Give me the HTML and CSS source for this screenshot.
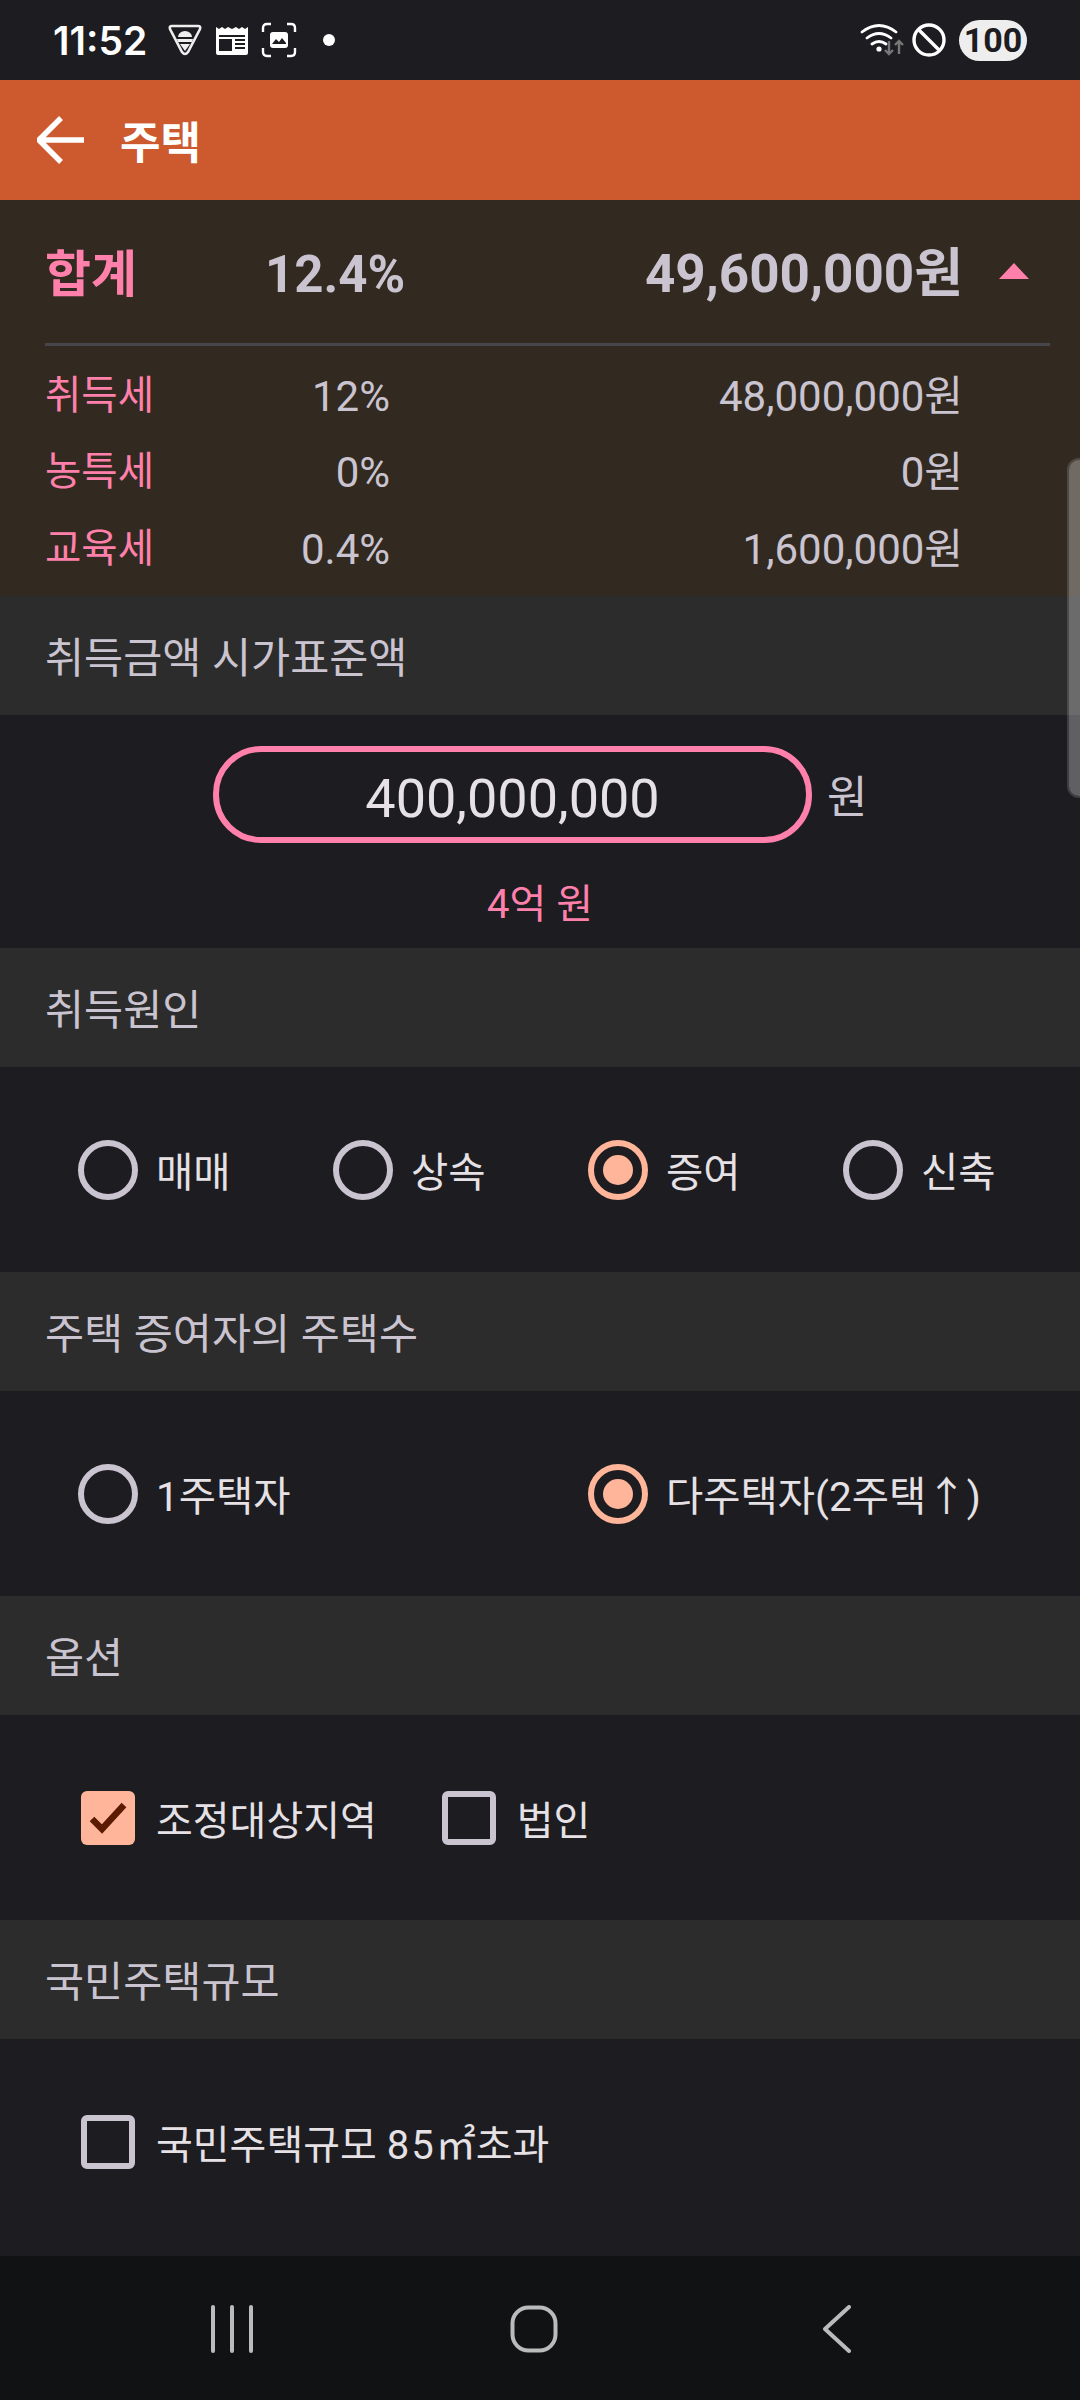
FILE: index.html
```html
<!DOCTYPE html>
<html lang="ko">
<head>
  <meta charset="UTF-8">
  <title>주택</title>
  <link rel="stylesheet" href="styles.css">
</head>
<body>
  <div class="phone">
    <div class="status">
      <span class="time">11:52</span>
      <svg class="ic-vpn" viewBox="0 0 34 32"><path d="M4 2h26q3 0 2 3L20 28q-3 4-6 0L2 5q-1-3 2-3z" fill="none" stroke="#eee" stroke-width="2.6"/><path d="M10 13a7 6 0 0 1 14 0z" fill="#eee"/><path d="M9 15h16l-1 3H10zM12 20h10l-5 7z" fill="#eee"/></svg>
      <svg class="ic-news" viewBox="0 0 34 30"><path d="M1 2l3 2 3-2 3 2 3-2 4 2 4-2 3 2 3-2 3 2 3-2v26q0 2-2 2H3q-2 0-2-2z" fill="#fff"/><path d="M4 10h26v2H4zM4 14h13v12H4zM20 14h10v2H20zM20 18h10v2H20zM20 22h10v2H20z" fill="#1c1c21"/></svg>
      <svg class="ic-shot" viewBox="0 0 36 36"><path d="M2 10V6q0-4 4-4h4M26 2h4q4 0 4 4v4M34 26v4q0 4-4 4h-4M10 34H6q-4 0-4-4v-4" fill="none" stroke="#fff" stroke-width="2.4"/><rect x="9" y="10" width="18" height="16" rx="3" fill="#fff"/><path d="M11 22l4-5 3 3 3-4 4 5v1H11z" fill="#1c1c21"/></svg>
      <span class="dot"></span>
      <span class="spacer"></span>
      <svg class="ic-wifi" viewBox="0 0 44 34"><path d="M2 9q17-13 34 0M7 15q12-9 24 0M12 21q7-5 14 0" fill="none" stroke="#fff" stroke-width="2.8" stroke-linecap="round"/><circle cx="19" cy="26" r="2.6" fill="#fff"/><path d="M29 18v13m-4-4l4 4 4-4M39 31V18m-4 4l4-4 4 4" fill="none" stroke="#777" stroke-width="2.4"/></svg>
      <svg class="ic-block" viewBox="0 0 34 34"><circle cx="17" cy="17" r="15" fill="none" stroke="#fff" stroke-width="3.4"/><path d="M7 7l20 20" stroke="#fff" stroke-width="3.4"/></svg>
      <span class="battery">100</span>
    </div>

    <header class="appbar">
      <svg class="back" viewBox="0 0 48 48"><path d="M47 24H3M24 2L2 24l22 22" fill="none" stroke="#fff" stroke-width="5.5"/></svg>
      <h1>주택</h1>
    </header>

    <section class="summary">
      <div class="sum-row total">
        <span class="sum-label">합계</span>
        <span class="sum-rate">12.4%</span>
        <span class="sum-amount">49,600,000원</span>
        <span class="caret"></span>
      </div>
      <div class="sum-row">
        <span class="sum-label">취득세</span>
        <span class="sum-rate">12%</span>
        <span class="sum-amount">48,000,000원</span>
      </div>
      <div class="sum-row">
        <span class="sum-label">농특세</span>
        <span class="sum-rate">0%</span>
        <span class="sum-amount">0원</span>
      </div>
      <div class="sum-row">
        <span class="sum-label">교육세</span>
        <span class="sum-rate">0.4%</span>
        <span class="sum-amount">1,600,000원</span>
      </div>
    </section>

    <h2 class="sec-title">취득금액 시가표준액</h2>
    <section class="amount">
      <div class="amount-line">
        <div class="pill">400,000,000</div>
        <span class="unit">원</span>
      </div>
      <div class="amount-hint">4억 원</div>
    </section>

    <h2 class="sec-title">취득원인</h2>
    <section class="opts cols4">
      <div class="opt"><span class="radio"></span>매매</div>
      <div class="opt"><span class="radio"></span>상속</div>
      <div class="opt"><span class="radio on"></span>증여</div>
      <div class="opt"><span class="radio"></span>신축</div>
    </section>

    <h2 class="sec-title">주택 증여자의 주택수</h2>
    <section class="opts cols2">
      <div class="opt"><span class="radio"></span>1주택자</div>
      <div class="opt"><span class="radio on"></span>다주택자(2주택↑)</div>
    </section>

    <h2 class="sec-title">옵션</h2>
    <section class="opts checks">
      <div class="opt"><span class="check on"><svg viewBox="0 0 54 54"><path d="M11 28l10 10 22-24" fill="none" stroke="#5a1b00" stroke-width="6.5"/></svg></span>조정대상지역</div>
      <div class="opt"><span class="check"></span>법인</div>
    </section>

    <h2 class="sec-title">국민주택규모</h2>
    <section class="opts checks last">
      <div class="opt"><span class="check"></span><span>국민주택규모 <span class="spaced">85</span>㎡초과</span></div>
    </section>

    <nav class="navbar">
      <svg class="nav-recent" viewBox="0 0 44 48"><path d="M3 2v44M22 2v44M41 2v44" stroke="#bbb" stroke-width="4" stroke-linecap="round"/></svg>
      <svg class="nav-home" viewBox="0 0 48 48"><rect x="2.5" y="2.5" width="43" height="43" rx="16" fill="none" stroke="#bbb" stroke-width="4"/></svg>
      <svg class="nav-back" viewBox="0 0 30 48"><path d="M27 2L3 24l24 22" fill="none" stroke="#bbb" stroke-width="4" stroke-linecap="round" stroke-linejoin="round"/></svg>
    </nav>

    <div class="scrollbar"></div>
  </div>
</body>
</html>
```

FILE: styles.css
```css
* {
  box-sizing: border-box;
}
html, body {
  margin: 0;
  padding: 0;
  background: #1c1c21;
}
.phone {
  position: relative;
  width: 1080px;
  height: 2400px;
  overflow: hidden;
  display: flex;
  flex-direction: column;
  font-family: Roboto, "Noto Sans CJK KR", sans-serif;
  color: #e6e1e5;
}

/* status bar */
.status {
  height: 80px;
  display: flex;
  align-items: center;
  padding: 0 53px 0 53px;
  background: #1c1c21;
  color: #fff;
}
.time {
  font-family: Inter, Roboto, sans-serif;
  font-size: 39px;
  font-weight: 600;
  width: 115px;
}
.ic-vpn { width: 34px; height: 32px; }
.ic-news { width: 34px; height: 30px; margin-left: 13px; }
.ic-shot { width: 36px; height: 36px; margin-left: 12px; }
.dot {
  width: 12px;
  height: 12px;
  border-radius: 50%;
  background: #fff;
  margin-left: 26px;
}
.spacer { flex: 1; }
.ic-wifi { width: 44px; height: 34px; }
.ic-block { width: 34px; height: 34px; margin-left: 8px; }
.battery {
  width: 68px;
  height: 41px;
  margin-left: 13px;
  border-radius: 21px;
  background: #eee;
  color: #1c1c21;
  font-size: 34px;
  font-weight: 700;
  line-height: 41px;
  text-align: center;
}

/* app bar */
.appbar {
  height: 120px;
  display: flex;
  align-items: center;
  padding-left: 37px;
  background: #cc5a2e;
}
.back { width: 48px; height: 48px; }
.appbar h1 {
  margin: 0 0 0 35px;
  font-size: 44px;
  font-weight: 700;
  color: #fff;
}

/* summary */
.summary {
  height: 396px;
  padding: 0 30px 8px 45px;
  background: #322a20;
  color: #cac4d0;
}
.sum-row {
  display: grid;
  grid-template-columns: 220px 125px 573px 87px;
  align-items: center;
  height: 76.5px;
  padding-top: 3px;
  font-size: 42px;
  line-height: 50px;
}
.sum-row .sum-label {
  margin-top: -2px;
  font-size: 39.5px;
}
.sum-row.total {
  height: 146px;
  margin-bottom: 11px;
  padding-top: 0;
  border-bottom: 3px solid #47464a;
  font-size: 53px;
  font-weight: 700;
}
.total .sum-label {
  margin-top: 6px;
  font-size: 50px;
}
.total .sum-rate {
  margin: 6px -13px 0 0;
  font-size: 51px;
}
.total .sum-amount { margin-top: 4px; }
.sum-label { color: #ff80ab; }
.sum-rate, .sum-amount { text-align: right; }
.caret {
  justify-self: end;
  width: 0;
  height: 0;
  margin: -2px 21px 0 0;
  border-left: 15px solid transparent;
  border-right: 15px solid transparent;
  border-bottom: 16px solid #ff80ab;
}

/* section headers */
.sec-title {
  height: 119px;
  margin: 0;
  padding: 3px 0 0 45px;
  background: #2c2c2c;
  color: #cac4d0;
  font-size: 42.5px;
  font-weight: 400;
  line-height: 119px;
}

/* amount input */
.amount {
  height: 233px;
  padding-top: 31px;
}
.amount-line {
  display: flex;
  align-items: center;
  padding-left: 213px;
}
.pill {
  width: 599px;
  height: 97px;
  border: 6px solid #ff80ab;
  border-radius: 48px;
  font-size: 54px;
  line-height: 93px;
  text-align: center;
}
.unit {
  margin: -2px 0 0 15px;
  color: #cac4d0;
  font-size: 44px;
}
.amount-hint {
  margin-top: 29px;
  color: #ff80ab;
  font-size: 40px;
  text-align: center;
}

/* radios and checks */
.opts {
  height: 205px;
  display: grid;
  align-items: center;
  padding-left: 78px;
  font-size: 40.5px;
}
.cols4 { grid-template-columns: repeat(4, 255px); }
.cols2 { grid-template-columns: repeat(2, 510px); }
.checks {
  display: flex;
  gap: 65px;
  padding-left: 81px;
  font-size: 40px;
}
.checks.last {
  height: 217px;
  padding-bottom: 12px;
}
.spaced { letter-spacing: 2px; }
.opt {
  display: flex;
  align-items: center;
}
.radio {
  width: 60px;
  height: 60px;
  margin-right: 18px;
  border: 6px solid #cac4d0;
  border-radius: 50%;
  display: flex;
  align-items: center;
  justify-content: center;
}
.radio.on { border-color: #ffb599; }
.radio.on::after {
  content: "";
  width: 30px;
  height: 30px;
  border-radius: 50%;
  background: #ffb599;
}
.check {
  width: 54px;
  height: 54px;
  margin-right: 21px;
  border: 6px solid #cac4d0;
  border-radius: 6px;
}
.check.on {
  border: 0;
  background: #ffb599;
}
.check svg {
  display: block;
  width: 54px;
  height: 54px;
}

/* navigation bar */
.navbar {
  flex: 1;
  display: flex;
  align-items: center;
  padding-top: 2px;
  padding-left: 210px;
  background: #111214;
}
.nav-recent { width: 44px; height: 48px; }
.nav-home { width: 48px; height: 48px; margin-left: 256px; }
.nav-back { width: 30px; height: 48px; margin-left: 264px; }

.scrollbar {
  position: absolute;
  top: 458px;
  right: 0;
  width: 13px;
  height: 340px;
  border: 2px solid rgba(255, 255, 255, 0.15);
  border-right: 0;
  border-radius: 12px 0 0 12px;
  background: rgba(255, 255, 255, 0.3);
  background-clip: padding-box;
}
```
